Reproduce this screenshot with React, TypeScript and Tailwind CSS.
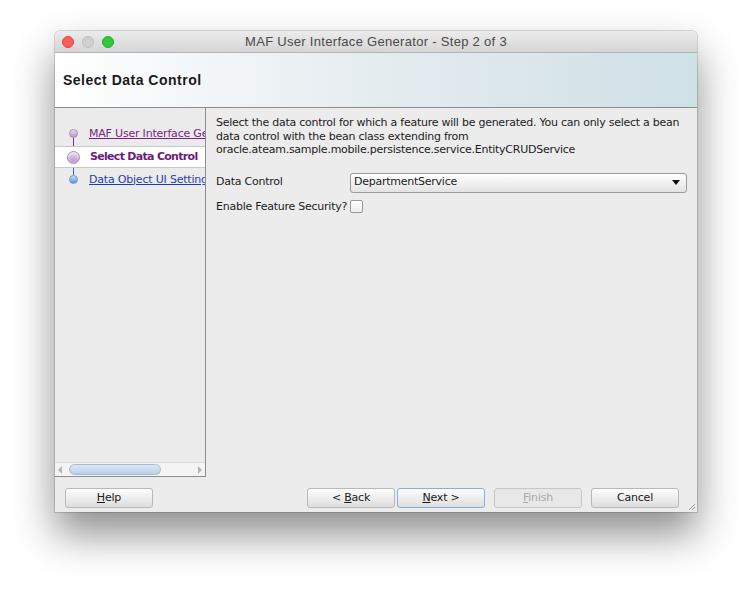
import React from 'react'

const ui = { fontFamily: '"DejaVu Sans", "Liberation Sans", sans-serif' }

function Light({ color, border }: { color: string; border: string }) {
    return <span className={`block h-[12px] w-[12px] rounded-full border ${color} ${border}`} />
}

function Btn({ children, focus, disabled }: { children: React.ReactNode; focus?: boolean; disabled?: boolean }) {
    const base = 'flex h-[20px] w-[88px] items-center justify-center rounded-[3px] border text-[11px] tracking-[-0.2px]'
    if (disabled) {
        return <div className={`${base} border-[#c6c6c6] bg-[#e8e8e8] text-[#a9a9a9]`}>{children}</div>
    }
    return (
        <div
            className={`${base} bg-gradient-to-b from-[#fdfdfd] to-[#dedede] text-[#1a1a1a] ${focus ? 'border-[#86aee0]' : 'border-[#b8b8b8]'}`}
        >
            {children}
        </div>
    )
}

export default function App() {
    return (
        <div className="h-[592px] w-[752px] overflow-hidden bg-white pl-[55px] pt-[31px]" style={ui}>
            <div className="flex h-[481px] w-[642px] flex-col overflow-hidden rounded-t-[5px] bg-[#ececec] shadow-[0_22px_42px_rgba(0,0,0,0.45),0_0_0_1px_rgba(0,0,0,0.14)]">
                {/* title bar */}
                <div className="relative flex h-[22px] items-center border-b border-[#b4b4b4] bg-gradient-to-b from-[#ececec] to-[#d5d5d5]">
                    <div className="flex gap-[8px] pl-[7px]">
                        <Light color="bg-[#fc5f57]" border="border-[#e0443e]" />
                        <Light color="bg-[#d0d0d0]" border="border-[#bcbcbc]" />
                        <Light color="bg-[#2fc940]" border="border-[#1dad2b]" />
                    </div>
                    <div
                        className="absolute inset-0 flex items-center justify-center pt-[1px] text-[13px] tracking-[0.3px] text-[#4a4a4a]"
                        style={{ fontFamily: '"Liberation Sans", Arial, sans-serif' }}
                    >
                        MAF User Interface Generator - Step 2 of 3
                    </div>
                </div>

                {/* header */}
                <div className="flex h-[55px] items-center border-b border-[#8c8c8c] bg-gradient-to-r from-white via-[#e5ecf0] to-[#cfe0e7] pl-[8px]">
                    <span
                        className="text-[14px] font-bold tracking-[0.5px] text-[#1a1a1a]"
                        style={{ fontFamily: '"Liberation Sans", Arial, sans-serif' }}
                    >
                        Select Data Control
                    </span>
                </div>

                {/* body */}
                <div className="flex flex-1">
                    {/* left train */}
                    <div className="flex h-[369px] w-[151px] flex-col border-r border-b border-[#8e8e8e] bg-[#ebebeb]">
                        <div className="relative flex-1 overflow-hidden pt-[14px] text-[11px]">
                            <div className="relative flex h-[24px] items-center overflow-hidden whitespace-nowrap">
                                <span className="absolute left-[14px] top-[7px] h-[9px] w-[9px] rounded-full border border-[#a48bb5] bg-gradient-to-b from-[#eadcf1] to-[#b79bcb]" />
                                <span className="absolute left-[18px] top-[16px] h-[10px] w-[1px] bg-[#7a2f8e]" />
                                <span className="ml-[34px] tracking-[-0.2px] text-[#7a1f86] underline">MAF User Interface Generator</span>
                            </div>
                            <div className="relative flex h-[22px] items-center whitespace-nowrap border-y border-[#c9c9c9] bg-white">
                                <span className="absolute left-[12px] top-[4px] h-[13px] w-[13px] rounded-full border border-[#a88ab8] bg-gradient-to-b from-[#f3ebf7] to-[#c0a5d2]" />
                                <span className="absolute left-[15px] top-[7px] h-[7px] w-[7px] rounded-full bg-gradient-to-b from-[#e3d3ec] to-[#b898cb]" />
                                <span className="ml-[35px] font-bold tracking-[-0.7px] text-[#6a1d7b]">Select Data Control</span>
                            </div>
                            <div className="relative flex h-[24px] items-center overflow-hidden whitespace-nowrap">
                                <span className="absolute left-[18px] top-[-2px] h-[9px] w-[1px] bg-[#3d64c8]" />
                                <span className="absolute left-[14px] top-[7px] h-[9px] w-[9px] rounded-full border border-[#6f94d6] bg-gradient-to-b from-[#cfe1fb] to-[#5c8fe0]" />
                                <span className="ml-[34px] tracking-[-0.2px] text-[#1d3fb0] underline">Data Object UI Settings</span>
                            </div>
                        </div>
                        {/* horizontal scrollbar */}
                        <div className="flex h-[14px] items-center border-t border-[#dcdcdc] bg-[#f4f4f4] px-[3px]">
                            <span className="h-0 w-0 border-y-[4px] border-r-[4px] border-y-transparent border-r-[#b5b5b5]" />
                            <span className="ml-[7px] h-[11px] w-[92px] rounded-full border border-[#a4bad6] bg-gradient-to-b from-[#dbe7f5] to-[#bccfe8]" />
                            <span className="ml-auto h-0 w-0 border-y-[4px] border-l-[4px] border-y-transparent border-l-[#b5b5b5]" />
                        </div>
                    </div>

                    {/* content */}
                    <div className="flex-1 pl-[10px] pr-[10px] pt-[8px] text-[11px] tracking-[-0.25px] text-[#1c1c1c]">
                        <p className="leading-[13.5px]">
                            Select the data control for which a feature will be generated. You can only select a bean
                            <br />
                            data control with the bean class extending from
                            <br />
                            oracle.ateam.sample.mobile.persistence.service.EntityCRUDService
                        </p>
                        <div className="mt-[16px] flex items-center">
                            <span className="w-[134px]">Data Control</span>
                            <div className="flex h-[20px] flex-1 items-center rounded-[3px] border border-[#9c9c9c] bg-gradient-to-b from-white to-[#e3e3e3] pl-[3px] pr-[6px]">
                                <span>DepartmentService</span>
                                <span className="ml-auto h-0 w-0 border-x-[4px] border-t-[5px] border-x-transparent border-t-[#111]" />
                            </div>
                        </div>
                        <div className="mt-[6px] flex items-center">
                            <span>Enable Feature Security?</span>
                            <span className="ml-[3px] h-[13px] w-[13px] rounded-[2px] border border-[#9a9a9a] bg-gradient-to-b from-white to-[#ededed]" />
                        </div>
                    </div>
                </div>

                {/* footer */}
                <div className="relative flex h-[35px] items-start pl-[10px] pr-[18px] pt-[11px]">
                    <Btn>
                        <span>
                            <u>H</u>elp
                        </span>
                    </Btn>
                    <div className="ml-auto flex gap-[2px]">
                        <Btn>
                            <span>
                                &lt; <u>B</u>ack
                            </span>
                        </Btn>
                        <Btn focus>
                            <span>
                                <u>N</u>ext &gt;
                            </span>
                        </Btn>
                        <div className="ml-[7px] flex gap-[9px]">
                            <Btn disabled>
                                <span>
                                    <u>F</u>inish
                                </span>
                            </Btn>
                            <Btn>Cancel</Btn>
                        </div>
                    </div>
                    <svg className="absolute bottom-[1px] right-[1px]" width="8" height="8" viewBox="0 0 8 8">
                        <path d="M7 1 L1 7 M7 4 L4 7" stroke="#a0a0a0" strokeWidth="1" />
                    </svg>
                </div>
            </div>
        </div>
    )
}
